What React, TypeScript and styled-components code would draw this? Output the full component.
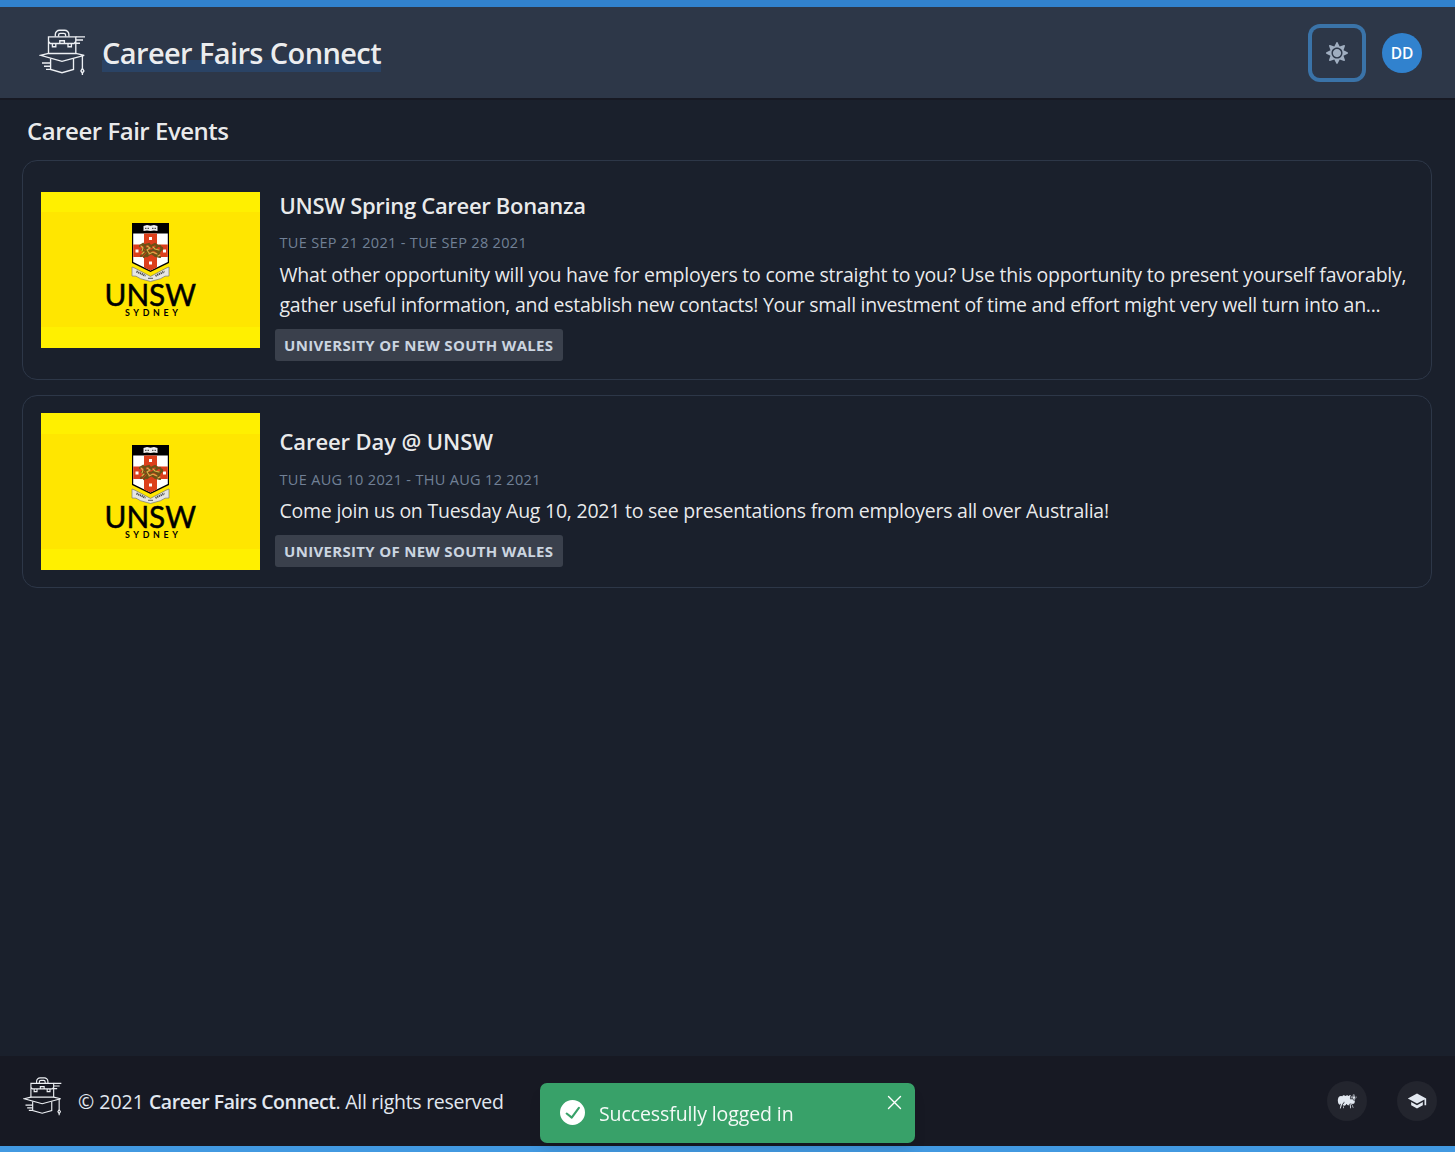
import React from "react";
import styled, { createGlobalStyle } from "styled-components";
import { FaSun } from "react-icons/fa";
import { GiSheep } from "react-icons/gi";
import { MdSchool } from "react-icons/md";

const GlobalStyle = createGlobalStyle`
  *, *::before, *::after { box-sizing: border-box; }
  body { margin: 0; background: #1a202c; }
  h1, h2, h3, p { margin: 0; }
  button { border: 0; padding: 0; cursor: pointer; font: inherit; }
`;

const Page = styled.div`
  display: flex;
  flex-direction: column;
  min-height: 100vh;
  border-top: 7px solid #3182ce;
  border-bottom: 6px solid #4299e1;
  background: #1a202c;
  color: rgba(255, 255, 255, 0.92);
  font-family: "Open Sans", "Noto Sans", sans-serif;
  font-size: 19.5px;
  line-height: 30px;
`;

const Header = styled.header`
  display: flex;
  align-items: center;
  height: 93px;
  padding: 1px 33px 0 39px;
  background: #2d3748;
  border-bottom: 2px solid #171923;
`;

const Brand = styled.a`
  display: flex;
  align-items: center;
  gap: 15px;
  flex: 1;
  svg { margin-bottom: 2px; }
`;

const BrandName = styled.h1`
  padding: 1px 0;
  font-size: 29px;
  line-height: 36px;
  font-weight: 600;
  letter-spacing: -0.61px;
  white-space: nowrap;
  background: linear-gradient(transparent 26px, #2a4365 26px);
`;

const ThemeButton = styled.button`
  display: grid;
  place-items: center;
  width: 50px;
  height: 50px;
  margin-right: 20px;
  border-radius: 8px;
  background: transparent;
  box-shadow: 0 0 0 4px #3a73a8;
  color: #a0aec0;
  font-size: 22px;
`;

const Avatar = styled.div`
  display: grid;
  place-items: center;
  width: 40px;
  height: 40px;
  border-radius: 50%;
  background: #3182ce;
  color: #fff;
  font-size: 15.5px;
  font-weight: 600;
`;

const Main = styled.main`
  flex: 1;
  padding: 13px 23px 0 22px;
`;

const SectionTitle = styled.h2`
  padding-left: 5px;
  margin-bottom: 11px;
  font-size: 24px;
  line-height: 36px;
  font-weight: 600;
  letter-spacing: -0.48px;
`;

const EventList = styled.div`
  display: grid;
  grid-template-columns: minmax(0, 1fr);
  gap: 15px;
`;

const Card = styled.article`
  display: flex;
  align-items: center;
  padding: 17px 18px;
  border: 1px solid #2d3748;
  border-radius: 15px;
`;

const Thumb = styled.div<{ $height: number }>`
  flex: none;
  width: 219px;
  height: ${(p) => p.$height}px;
  padding-top: ${(p) => Math.floor((p.$height - 115) / 2)}px;
  background: #fff000;
  svg { display: block; }
`;

const EventBody = styled.div`
  min-width: 0;
  padding: 10.5px 0 1.5px 19.500px;
`;

const EventTitle = styled.h3<{ $track: number }>`
  margin-bottom: 12.5px;
  font-size: 22px;
  line-height: 32px;
  font-weight: 600;
  letter-spacing: ${(p) => p.$track}px;
`;

const EventDate = styled.p<{ $track: number }>`
  margin-bottom: 6.5px;
  color: #718096;
  font-size: 14.5px;
  line-height: 20px;
  font-weight: 500;
  text-transform: uppercase;
  letter-spacing: ${(p) => p.$track}px;
`;

const TextLine = styled.span<{ $track: number }>`
  display: block;
  white-space: nowrap;
  letter-spacing: ${(p) => p.$track}px;
`;

const Tag = styled.span`
  display: block;
  width: 288px;
  height: 32px;
  margin: 9px 0 0 -4.5px;
  padding-left: 9px;
  border-radius: 3px;
  background: #3a404c;
  color: #cbd5e0;
  font-size: 15px;
  line-height: 33px;
  font-weight: 700;
  letter-spacing: 0.31px;
  text-transform: uppercase;
  white-space: nowrap;
`;

const Footer = styled.footer`
  display: flex;
  align-items: center;
  height: 90px;
  padding: 0 18px 0 23px;
  background: #171923;
  color: #e2e8f0;
`;

const FooterLogo = styled.div`
  display: flex;
  margin-bottom: 10px;
`;

const Copyright = styled.p`
  flex: 1;
  margin: 2px 0 0 15px;
  white-space: nowrap;
`;

const BoldName = styled.strong`
  font-weight: 600;
  letter-spacing: -0.46px;
`;

const Rights = styled.span`
  letter-spacing: -0.28px;
`;

const FooterLinks = styled.div`
  display: flex;
  gap: 30px;
`;

const RoundLink = styled.a`
  display: grid;
  place-items: center;
  width: 40px;
  height: 40px;
  border-radius: 50%;
  background: #23252e;
  font-size: 20px;
`;

const Toast = styled.div`
  position: fixed;
  left: 540px;
  bottom: 9px;
  display: flex;
  align-items: center;
  width: 375px;
  height: 60px;
  padding: 0 13px 0 20px;
  border-radius: 7px;
  background: #38a169;
  color: #fff;
  box-shadow: 0 10px 15px -3px rgba(0, 0, 0, 0.1), 0 4px 6px -2px rgba(0, 0, 0, 0.05);
`;

const ToastIcon = styled.svg`
  margin-bottom: 1px;
`;

const ToastText = styled.span`
  flex: 1;
  padding: 2px 0 0 14px;
  letter-spacing: -0.1px;
  color: rgba(255, 255, 255, 0.94);
`;

const ToastClose = styled.button`
  display: flex;
  margin-bottom: 21px;
  background: none;
`;

function CareerLogo({ size }: { size: number }) {
  return (
    <svg width={size} height={size} viewBox="39 28 48 48" fill="none" stroke="#edf0f4" strokeWidth="1.35">
      <path d="M55.3 36.5V34.5a4.300 4.300 0 0 1 4.300-4.300h5a4.300 4.300 0 0 1 4.300 4.300v2" />
      <path d="M58.600 36.500v-1.400a1.800 1.800 0 0 1 1.800-1.800h3.400a1.800 1.800 0 0 1 1.800 1.800v1.400" />
      <path d="M48.500 53.500V36.800h27.300v16.700M48.500 41.500l1.700 2h23.900l1.700-2M59.800 43.500v-2.800h4.600v2.800" />
      <path d="M52.400 43.500v3.200h3.400v-3.200M68 43.500v3.200h3.400v-3.200" />
      <path d="M75.800 36.800H85M75.800 40h7.200M75.800 43.200h4.200" />
      <path d="M48.500 53.300L40.700 55.300 62 61.300l22.200-6-8.400-2zM48.500 53.500h27.300" />
      <path d="M50.600 58.500v11L62 72.700l11.500-3.200v-11" />
      <path d="M42 63h8.600M44 66.200h6.600M46 69.300h4.600" />
      <path d="M82.400 55.500v12.700M82.400 68.300l-1.500 2.700 1.500 2.200 1.500-2.200zM82.400 73v2" />
    </svg>
  );
}

function UnswLogo() {
  return (
    <svg width="219" height="115" viewBox="0 0 219 115">
      <rect width="219" height="115" fill="#ffe600" />
      <path d="M91 11h37v40l-18.500 9L91 51z" fill="#000" />
      <path d="M92.200 21.500h34.600V50l-17.300 8.600L92.200 50z" fill="#fff" />
      <path d="M103 21.500h13v34l-6.500 3-6.500-3zM92.200 32.500h34.600v12.600H92.200z" fill="#dc3f1c" />
      <path d="M108 25h3v3h-3zM108 49.500h3v3h-3zM94.500 37.500h3v3h-3zM122 37.500h3v3h-3z" fill="#fff" />
      <path d="M102.500 14l3.500-1 3.500.8 3.500-.8 3.500 1v5l-3.500-.5-3.500.6-3.500-.6-3.500.5z" fill="#eee" />
      <path d="M104 16.300h4M111 16.300h4" stroke="#555" strokeWidth="1.300" strokeDasharray="1 .5" />
      <g fill="none" strokeLinecap="round">
        <path d="M99 34l3-2 2 3-3 3 3 2-4 4M104 33l4-1 2 3-5 2 2 4-4 4M110 34l4-2 3 2-4 3 6 2 2-3M108 39l6-1 4 3-3 3 4 1M106 44l4-3 5 3M119 34l2 3-3 3" stroke="#6b5216" strokeWidth="2.200" />
        <path d="M100 34l2 2-1 3M106 34l3 2-3 2 2 3M112 35l2 2 4 1M108 42l4-2 4 2M117 44l2-1M101 42l2-2" stroke="#d9b24c" strokeWidth="1.100" />
      </g>
      <path d="M91 55l3 1.200 15.500 8.200 15.500-8.200 3-1.200v9l-4 .2-4.500 2.500-10 2.800-10-2.800-4.500-2.500-4-.2z" fill="#e6e6e3" stroke="#777" strokeWidth=".7" />
      <path d="M95.500 59.500l9 4.300M114.500 63.800l9-4.300" stroke="#444" strokeWidth="2" strokeDasharray="1.200 .7" />
      <path d="M107 66.300h5" stroke="#555" strokeWidth="1" />
      <text x="63.500" y="94" fontFamily="Lato, sans-serif" fontSize="31.500" fontWeight="400" stroke="#000" strokeWidth=".5" textLength="91.500" lengthAdjust="spacingAndGlyphs">UNSW</text>
      <text x="84" y="103.500" fontFamily="Lato, sans-serif" fontSize="8.800" fontWeight="700" textLength="53">SYDNEY</text>
    </svg>
  );
}

interface FairEvent {
  title: string;
  titleTrack: number;
  dates: string;
  dateTrack: number;
  lines: { text: string; track: number }[];
  thumbHeight: number;
}

const events: FairEvent[] = [
  {
    title: "UNSW Spring Career Bonanza",
    titleTrack: -0.31,
    dates: "Tue Sep 21 2021 - Tue Sep 28 2021",
    dateTrack: 0.32,
    lines: [
      { text: "What other opportunity will you have for employers to come straight to you? Use this opportunity to present yourself favorably,", track: -0.224 },
      { text: "gather useful information, and establish new contacts! Your small investment of time and effort might very well turn into an...", track: -0.272 },
    ],
    thumbHeight: 156,
  },
  {
    title: "Career Day @ UNSW",
    titleTrack: -0.1,
    dates: "Tue Aug 10 2021 - Thu Aug 12 2021",
    dateTrack: 0.32,
    lines: [{ text: "Come join us on Tuesday Aug 10, 2021 to see presentations from employers all over Australia!", track: -0.24 }],
    thumbHeight: 157,
  },
];

export default function App() {
  return (
    <Page>
      <GlobalStyle />
      <Header>
        <Brand>
          <CareerLogo size={48} />
          <BrandName>Career Fairs Connect</BrandName>
        </Brand>
        <ThemeButton aria-label="Toggle theme"><FaSun /></ThemeButton>
        <Avatar>DD</Avatar>
      </Header>
      <Main>
        <SectionTitle>Career Fair Events</SectionTitle>
        <EventList>
          {events.map((e) => (
            <Card key={e.title}>
              <Thumb $height={e.thumbHeight}><UnswLogo /></Thumb>
              <EventBody>
                <EventTitle $track={e.titleTrack}>{e.title}</EventTitle>
                <EventDate $track={e.dateTrack}>{e.dates}</EventDate>
                {e.lines.map((l) => <TextLine key={l.text} $track={l.track}>{l.text}</TextLine>)}
                <Tag>University of New South Wales</Tag>
              </EventBody>
            </Card>
          ))}
        </EventList>
      </Main>
      <Footer>
        <FooterLogo><CareerLogo size={40} /></FooterLogo>
        <Copyright>© 2021 <BoldName>Career Fairs Connect</BoldName><Rights>. All rights reserved</Rights></Copyright>
        <FooterLinks>
          <RoundLink><GiSheep /></RoundLink>
          <RoundLink><MdSchool /></RoundLink>
        </FooterLinks>
      </Footer>
      <Toast role="alert">
        <ToastIcon width="25" height="25" viewBox="0 0 24 24" fill="#fff">
          <path d="M12,0A12,12,0,1,0,24,12,12.014,12.014,0,0,0,12,0Zm6.927,8.2-6.845,9.289a1.011,1.011,0,0,1-1.43.188L5.764,13.769a1,1,0,1,1,1.25-1.562l4.076,3.261,6.227-8.451A1,1,0,1,1,18.927,8.2Z" />
        </ToastIcon>
        <ToastText>Successfully logged in</ToastText>
        <ToastClose aria-label="Close">
          <svg width="15" height="15" viewBox="0 0 15 15" stroke="#fff" strokeWidth="1.4" strokeLinecap="round">
            <path d="M1.500 1.500l12 12M13.500 1.500l-12 12" />
          </svg>
        </ToastClose>
      </Toast>
    </Page>
  );
}
